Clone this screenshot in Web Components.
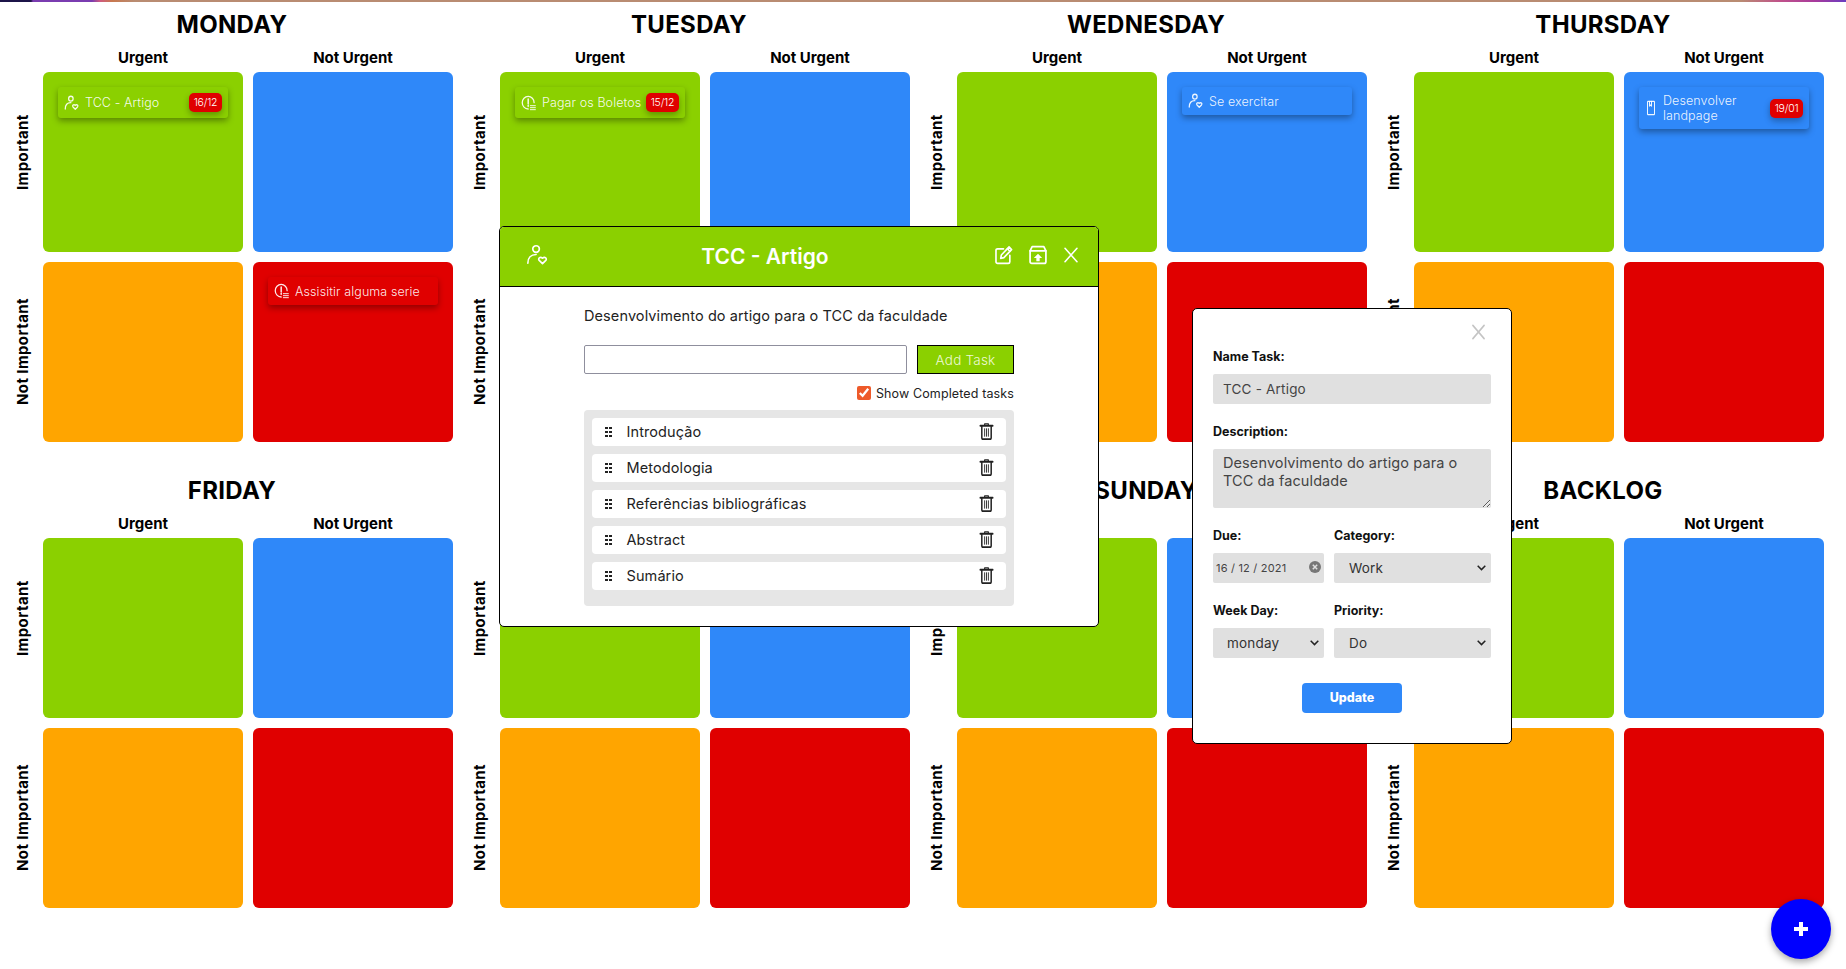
<!DOCTYPE html>
<html lang="en">
<head>
<meta charset="utf-8">
<title>Weekly Eisenhower Board</title>
<style>
  html, body { margin: 0; height: 100%; overflow: hidden; background: #fff; }
  body { font-family: Inter, "Liberation Sans", sans-serif; color: #000; }
</style>
</head>
<body>
<top-bar></top-bar>
<week-board>
  <day-board name="MONDAY">
    <task-card slot="do" icon="person" date="16/12">TCC - Artigo</task-card>
    <task-card slot="delete" icon="alert">Assisitir alguma serie</task-card>
  </day-board>
  <day-board name="TUESDAY">
    <task-card slot="do" icon="alert" date="15/12">Pagar os Boletos</task-card>
  </day-board>
  <day-board name="WEDNESDAY">
    <task-card slot="schedule" icon="person">Se exercitar</task-card>
  </day-board>
  <day-board name="THURSDAY">
    <task-card slot="schedule" icon="book" date="19/01">Desenvolver landpage</task-card>
  </day-board>
  <day-board name="FRIDAY"></day-board>
  <day-board name="SATURDAY"></day-board>
  <day-board name="SUNDAY"></day-board>
  <day-board name="BACKLOG"></day-board>
</week-board>
<task-modal name="TCC - Artigo" description="Desenvolvimento do artigo para o TCC da faculdade">
  <sub-task>Introdução</sub-task>
  <sub-task>Metodologia</sub-task>
  <sub-task>Referências bibliográficas</sub-task>
  <sub-task>Abstract</sub-task>
  <sub-task>Sumário</sub-task>
</task-modal>
<edit-modal></edit-modal>
<add-button></add-button>

<script>
const ICONS = {
  person: '<circle cx="11" cy="5.5" r="3.6"/><path d="M2 21c0-6 3.5-9.5 9-9.5"/><path d="M18 21.5l-3.6-3.6c-1.7-2 .9-4.6 3.6-2.4 2.7-2.2 5.3.4 3.6 2.4z"/>',
  alert: '<path d="M21 11.5a9.5 9.5 0 1 0-9.5 9.5"/><path d="M11.5 6v7M11.5 15.5v1.5" stroke-width="2.4"/><path d="M15 16h8M15 19h8M15 22h8" stroke-width="1.5"/>',
  book: '<rect x="5" y="2" width="14" height="20" rx="1"/><path d="M9 2v7l2-1.5 2 1.5V2"/>',
  edit: '<path d="M20 12.5V20a2 2 0 0 1-2 2H4.500a2 2 0 0 1-2-2V6.500a2 2 0 0 1 2-2H12"/><path d="M8.500 16l.8-4L19 2.300l3.200 3.200L12.500 15.200z"/><path d="M17 4.500l3 3"/>',
  archive: '<path d="M5 2h14l2.500 5v13a2 2 0 0 1-2 2H4.500a2 2 0 0 1-2-2V7z"/><path d="M2.500 7h19"/><path d="M12 10.500l-5 5H10V19.500h4v-4h3z" fill="currentColor" stroke="none"/>',
  close: '<path d="M3 2l18 20M21 2L3 22"/>',
  trash: '<path d="M2 5h20" stroke-width="2.400"/><path d="M9 4.500V2.500h6v2"/><path d="M4.500 6v15a2 2 0 0 0 2 2h11a2 2 0 0 0 2-2V6" stroke-width="2.400"/><path d="M9 9v10M12 9v10M15 9v10" stroke-width="1.300"/>'
};

class AppIcon extends HTMLElement {
  constructor() {
    super();
    this.attachShadow({ mode: 'open' });
  }

  connectedCallback() {
    const name = this.getAttribute('name');
    const width = this.getAttribute('width') || 16;
    const height = this.getAttribute('height') || width;
    const stroke = this.getAttribute('stroke') || 1.6;
    this.shadowRoot.innerHTML = `
      <style>
        :host { display: inline-flex; flex: none; }
        svg { display: block; }
      </style>
      <svg width="${width}" height="${height}" viewBox="0 0 24 24" fill="none" stroke="currentColor"
           stroke-width="${stroke}" stroke-linecap="round" stroke-linejoin="round" preserveAspectRatio="none">${ICONS[name]}</svg>
    `;
  }
}

class TopBar extends HTMLElement {
  constructor() {
    super();
    this.attachShadow({ mode: 'open' });
    this.shadowRoot.innerHTML = `
      <style>
        :host {
          display: block;
          height: 2px;
          background: linear-gradient(90deg, #1c1448 0, #1c1448 31px, #7a3cb0 33px, #7a3cb0 92px, #cf5a80 100px, #c8784f 112px, #b98c72 135px, #b98c72 1740px, #c0528a 1780px, #a83a9c 1815px, #6a3cc0 1846px);
        }
      </style>
    `;
  }
}

class WeekBoard extends HTMLElement {
  constructor() {
    super();
    this.attachShadow({ mode: 'open' });
    this.shadowRoot.innerHTML = `
      <style>
        :host {
          display: grid;
          grid-template-columns: repeat(4, 442px);
          column-gap: 15px;
          row-gap: 28px;
          padding: 2px 0 0 11px;
        }
      </style>
      <slot></slot>
    `;
  }
}

class DayBoard extends HTMLElement {
  constructor() {
    super();
    this.attachShadow({ mode: 'open' });
  }

  connectedCallback() {
    const name = this.getAttribute('name');
    this.shadowRoot.innerHTML = `
      <style>
        :host {
          display: grid;
          grid-template-columns: 22px 200px 200px;
          grid-template-rows: 40px 28px 180px 190px;
          column-gap: 10px;
        }
        h2 {
          grid-column: 1 / -1;
          margin: 0;
          padding-top: 1px;
          font-size: 24px;
          line-height: 40px;
          height: 40px;
          box-sizing: border-box;
          font-weight: 700;
          text-align: center;
          letter-spacing: .3px;
        }
        .head {
          font-size: 15px;
          font-weight: 700;
          line-height: 28px;
          text-align: center;
        }
        .side {
          writing-mode: vertical-rl;
          transform: rotate(180deg);
          font-size: 15px;
          letter-spacing: .4px;
          font-weight: 700;
          text-align: center;
          line-height: 22px;
          position: relative;
          left: 1px;
        }
        .side.up { padding-top: 20px; box-sizing: border-box; }
        .side.low { padding-bottom: 10px; box-sizing: border-box; }
        .quad {
          height: 180px;
          box-sizing: border-box;
          padding: 15px;
          border-radius: 6px;
        }
        .quad.low { margin-top: 10px; }
        .green { background: #8bd000; }
        .blue { background: #2f88f9; }
        .orange { background: #ffa500; }
        .red { background: #e00000; }
        .quad ::slotted(*) { margin-bottom: 8px; }
      </style>
      <h2>${name}</h2>
      <span></span>
      <div class="head">Urgent</div>
      <div class="head">Not Urgent</div>
      <div class="side up">Important</div>
      <div class="quad green"><slot name="do"></slot></div>
      <div class="quad blue"><slot name="schedule"></slot></div>
      <div class="side low">Not Important</div>
      <div class="quad low orange"><slot name="delegate"></slot></div>
      <div class="quad low red"><slot name="delete"></slot></div>
    `;
  }
}

class TaskCard extends HTMLElement {
  constructor() {
    super();
    this.attachShadow({ mode: 'open' });
  }

  connectedCallback() {
    const icon = this.getAttribute('icon');
    const date = this.getAttribute('date');
    const width = icon === 'book' ? 12 : 15;
    this.shadowRoot.innerHTML = `
      <style>
        :host {
          display: flex;
          align-items: center;
          gap: 6px;
          box-sizing: border-box;
          width: 170px;
          padding: 6px;
          border-radius: 3px;
          color: rgba(255, 255, 255, .92);
          font-size: 12.500px;
          line-height: 15px;
          font-weight: 300;
          letter-spacing: .1px;
          box-shadow: 0 3px 6px rgba(0, 0, 0, .35);
        }
        .text { flex: 1; min-width: 0; }
        .date {
          flex: none;
          width: 33px;
          height: 19px;
          margin-left: -5px;
          line-height: 19px;
          text-align: center;
          font-size: 10.500px;
          letter-spacing: -.2px;
          color: #fff;
          background: #e00000;
          border-radius: 5px;
          box-shadow: 0 3px 6px rgba(0, 0, 0, .3);
        }
      </style>
      <app-icon name="${icon}" width="${width}" height="16" stroke="2"></app-icon>
      <span class="text"><slot></slot></span>
      ${date ? `<span class="date">${date}</span>` : ''}
    `;
  }
}

class SubTask extends HTMLElement {
  constructor() {
    super();
    this.attachShadow({ mode: 'open' });
    this.shadowRoot.innerHTML = `
      <style>
        :host {
          display: flex;
          align-items: center;
          height: 28px;
          padding: 0 12px;
          background: #fff;
          border-radius: 4px;
          font-size: 14.500px;
          letter-spacing: .1px;
          color: #222;
        }
        .grip {
          display: grid;
          grid-template-columns: 2.500px 2.500px;
          gap: 1.500px;
          margin-right: 15px;
          padding-left: 1px;
        }
        .grip i { height: 2.500px; background: #222; }
        .text { flex: 1; margin-top: -2px; }
        app-icon { margin-top: -3px; color: #222; }
      </style>
      <span class="grip"><i></i><i></i><i></i><i></i><i></i><i></i></span>
      <span class="text"><slot></slot></span>
      <app-icon name="trash" width="15" height="18" stroke="1.800"></app-icon>
    `;
  }
}

class TaskModal extends HTMLElement {
  constructor() {
    super();
    this.attachShadow({ mode: 'open' });
  }

  connectedCallback() {
    const name = this.getAttribute('name');
    const description = this.getAttribute('description');
    this.shadowRoot.innerHTML = `
      <style>
        :host {
          position: fixed;
          left: 499px;
          top: 226px;
          width: 600px;
          height: 401px;
          box-sizing: border-box;
          background: #fff;
          border: 1px solid #000;
          border-radius: 5px;
          overflow: hidden;
        }
        header {
          display: flex;
          align-items: center;
          height: 60px;
          box-sizing: border-box;
          padding: 0 19px 4px 26px;
          background: #8bd000;
          color: #fff;
          border-bottom: 1px solid #000;
        }
        h1 {
          flex: 1;
          margin: 4px 12px 0 0;
          font-size: 21px;
          font-weight: 600;
          text-align: center;
        }
        .tools { display: flex; align-items: center; gap: 15px; }
        main { padding: 19px 84px 0; }
        p { margin: 0 0 19px; font-size: 14.500px; line-height: 20px; letter-spacing: .1px; color: #222; }
        .add { display: flex; gap: 10px; }
        input[type=text] {
          flex: 1;
          min-width: 0;
          height: 29px;
          box-sizing: border-box;
          border: 1px solid #8f8f9d;
          border-radius: 2px;
          padding: 0 6px;
          font: inherit;
        }
        button {
          width: 97px;
          height: 29px;
          box-sizing: border-box;
          border: 1px solid #000;
          background: #8bd000;
          color: #eef9d6;
          font: 300 13.500px Inter, sans-serif;
          letter-spacing: .2px;
          padding: 0;
        }
        label {
          display: flex;
          justify-content: flex-end;
          align-items: center;
          gap: 5px;
          height: 18px;
          margin: 10px 0 8px;
          font-size: 12.500px;
          letter-spacing: .12px;
          color: #222;
        }
        input[type=checkbox] {
          width: 14px;
          height: 14px;
          margin: 0;
          accent-color: #ee5a2a;
        }
        ul {
          display: flex;
          flex-direction: column;
          gap: 8px;
          margin: 0;
          padding: 8px 8px 16px;
          background: #e6e6e6;
          border-radius: 4px;
        }
      </style>
      <header>
        <app-icon name="person" width="22" height="22" stroke="1.800"></app-icon>
        <h1>${name}</h1>
        <div class="tools">
          <app-icon name="edit" width="19" height="20" stroke="2.100"></app-icon>
          <app-icon name="archive" width="20" height="20" stroke="2.100"></app-icon>
          <app-icon name="close" width="16" height="16" stroke="2.400"></app-icon>
        </div>
      </header>
      <main>
        <p>${description}</p>
        <div class="add"><input type="text"><button>Add Task</button></div>
        <label><input type="checkbox" checked>Show Completed tasks</label>
        <ul><slot></slot></ul>
      </main>
    `;
  }
}

class FormField extends HTMLElement {
  constructor() {
    super();
    this.attachShadow({ mode: 'open' });
  }

  connectedCallback() {
    const label = this.getAttribute('label');
    this.shadowRoot.innerHTML = `
      <style>
        :host { display: block; min-width: 0; }
        div {
          height: 16px;
          line-height: 16px;
          margin-bottom: 9px;
          font-size: 12.500px;
          font-weight: 700;
          color: #111;
        }
      </style>
      <div>${label}</div>
      <slot></slot>
    `;
  }
}

class FormSelect extends HTMLElement {
  constructor() {
    super();
    this.attachShadow({ mode: 'open' });
  }

  connectedCallback() {
    const value = this.getAttribute('value');
    const pad = this.getAttribute('pad') || 15;
    this.shadowRoot.innerHTML = `
      <style>
        :host { display: block; position: relative; }
        select {
          display: block;
          appearance: none;
          width: 100%;
          height: 30px;
          border: 0;
          border-radius: 2px;
          padding: 0 0 0 ${pad}px;
          background: #e0e0e0;
          color: #333;
          font: 400 13.500px Inter, sans-serif;
          letter-spacing: .2px;
        }
        svg { position: absolute; right: 5px; top: 12px; }
      </style>
      <select><option>${value}</option></select>
      <svg width="9" height="6" viewBox="0 0 9 6" fill="none" stroke="#222" stroke-width="1.500"><path d="M.7.8l3.800 3.800L8.300.8"/></svg>
    `;
  }
}

class EditModal extends HTMLElement {
  constructor() {
    super();
    this.attachShadow({ mode: 'open' });
    this.shadowRoot.innerHTML = `
      <style>
        :host {
          position: fixed;
          left: 1192px;
          top: 308px;
          width: 320px;
          height: 436px;
          box-sizing: border-box;
          padding: 15px 20px 0;
          background: #fff;
          border: 1px solid #000;
          border-radius: 5px;
        }
        .top { display: flex; justify-content: flex-end; height: 16px; margin: 0 5px 9px 0; color: #c4c4c4; }
        .stack { display: flex; flex-direction: column; gap: 20px; }
        .pair { display: grid; gap: 10px; }
        .first { grid-template-columns: 111px 157px; }
        input, textarea, .date {
          display: block;
          width: 100%;
          box-sizing: border-box;
          border: 0;
          border-radius: 2px;
          background: #e0e0e0;
          color: #444;
          font: 400 13.500px Inter, sans-serif;
          letter-spacing: .2px;
          outline: 0;
        }
        input { height: 30px; padding: 0 10px; }
        textarea { height: 59px; padding: 5px 10px; line-height: 18px; font-size: 14.500px; letter-spacing: .1px; resize: vertical; }
        .date {
          display: flex;
          align-items: center;
          justify-content: space-between;
          height: 30px;
          padding: 0 3px 0 3px;
          font-size: 11px;
        }
        .clear { position: relative; top: -1px; display: block; }
        button {
          display: block;
          width: 100px;
          height: 30px;
          margin: 25px auto 0;
          border: 0;
          border-radius: 4px;
          background: #2f88f9;
          color: #fff;
          font: 800 12.500px Inter, sans-serif;
          padding: 0 0 1px;
        }
      </style>
      <div class="top"><app-icon name="close" width="15" height="16" stroke="2.500"></app-icon></div>
      <div class="stack">
        <form-field label="Name Task:"><input value="TCC - Artigo"></form-field>
        <form-field label="Description:"><textarea>Desenvolvimento do artigo para o TCC da faculdade</textarea></form-field>
        <div class="pair first">
          <form-field label="Due:">
            <div class="date">16 / 12 / 2021
              <svg class="clear" width="12" height="12" viewBox="0 0 12 12"><circle cx="6" cy="6" r="6" fill="#777"/><path d="M3.800 3.800l4.400 4.400M8.200 3.800L3.800 8.200" stroke="#e0e0e0" stroke-width="1.500"/></svg>
            </div>
          </form-field>
          <form-field label="Category:"><form-select value="Work"></form-select></form-field>
        </div>
        <div class="pair first">
          <form-field label="Week Day:"><form-select value="monday" pad="14"></form-select></form-field>
          <form-field label="Priority:"><form-select value="Do"></form-select></form-field>
        </div>
      </div>
      <button>Update</button>
    `;
  }
}

class AddButton extends HTMLElement {
  constructor() {
    super();
    this.attachShadow({ mode: 'open' });
    this.shadowRoot.innerHTML = `
      <style>
        :host {
          position: fixed;
          right: 15px;
          bottom: 10px;
          display: flex;
          align-items: center;
          justify-content: center;
          width: 60px;
          height: 60px;
          border-radius: 50%;
          background: #0000ff;
          box-shadow: 0 3px 7px rgba(0, 0, 0, .35);
        }
      </style>
      <svg width="14" height="14" viewBox="0 0 14 14"><path d="M5 0h4v5h5v4H9v5H5V9H0V5h5z" fill="#fff"/></svg>
    `;
  }
}

customElements.define('app-icon', AppIcon);
customElements.define('top-bar', TopBar);
customElements.define('week-board', WeekBoard);
customElements.define('day-board', DayBoard);
customElements.define('task-card', TaskCard);
customElements.define('sub-task', SubTask);
customElements.define('task-modal', TaskModal);
customElements.define('form-field', FormField);
customElements.define('form-select', FormSelect);
customElements.define('edit-modal', EditModal);
customElements.define('add-button', AddButton);
</script>
</body>
</html>
